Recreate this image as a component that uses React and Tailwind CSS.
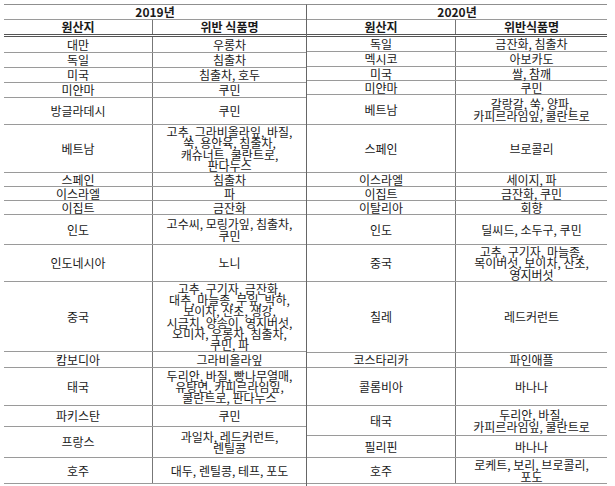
import React from 'react';

const left = [
  ['대만', '우롱차', 'h-[16px]'],
  ['독일', '침출차', 'h-[15px]'],
  ['미국', '침출차, 호두', 'h-[15px]'],
  ['미얀마', '쿠민', 'h-[15px]'],
  ['방글라데시', '쿠민', 'h-[27px]'],
  ['베트남', '고추, 그라비올라잎, 바질,\n쑥, 용안육, 침출차,\n캐슈너트, 쿨란트로,\n판다누스', 'h-[48px]'],
  ['스페인', '침출차', 'h-[14px]'],
  ['이스라엘', '파', 'h-[14px]'],
  ['이집트', '금잔화', 'h-[14px]'],
  ['인도', '고수씨, 모링가잎, 침출차,\n쿠민', 'h-[30px]'],
  ['인도네시아', '노니', 'h-[37px]'],
  ['중국', '고추, 구기자, 금잔화,\n대추, 마늘종, 무잎, 박하,\n보이차, 산초, 생강,\n시금치, 양송이, 영지버섯,\n오미자, 우롱차, 침출차,\n쿠민, 파', 'h-[70px]'],
  ['캄보디아', '그라비올라잎', 'h-[16px]'],
  ['태국', '두리안, 바질, 빵나무열매,\n유탕면, 카피르라임잎,\n쿨란트로, 판다누스', 'h-[38px]'],
  ['파키스탄', '쿠민', 'h-[21px]'],
  ['프랑스', '과일차, 레드커런트,\n렌틸콩', 'h-[31px]'],
  ['호주', '대두, 렌틸콩, 테프, 포도', 'h-[26px]'],
];

const right = [
  ['독일', '금잔화, 침출차', 'h-[15px]'],
  ['멕시코', '아보카도', 'h-[15px]'],
  ['미국', '쌀, 참깨', 'h-[14px]'],
  ['미얀마', '쿠민', 'h-[14px]'],
  ['베트남', '갈랑갈, 쑥, 양파,\n카피르라임잎, 쿨란트로', 'h-[30px]'],
  ['스페인', '브로콜리', 'h-[48px]'],
  ['이스라엘', '세이지, 파', 'h-[14px]'],
  ['이집트', '금잔화, 쿠민', 'h-[14px]'],
  ['이탈리아', '회향', 'h-[14px]'],
  ['인도', '딜씨드, 소두구, 쿠민', 'h-[30px]'],
  ['중국', '고추, 구기자, 마늘종,\n목이버섯, 보이차, 산초,\n영지버섯', 'h-[37px]'],
  ['칠레', '레드커런트', 'h-[71px]'],
  ['코스타리카', '파인애플', 'h-[15px]'],
  ['콜롬비아', '바나나', 'h-[38px]'],
  ['태국', '두리안, 바질,\n카피르라임잎, 쿨란트로', 'h-[30px]'],
  ['필리핀', '바나나', 'h-[22px]'],
  ['호주', '로케트, 보리, 브로콜리,\n포도', 'h-[26px]'],
];

function YearTable({ year, itemLabel, rows, className }) {
  return (
    <div className={`flex flex-col border-t border-[#8f8f8f] ${className}`}>
      <div className="h-[15px] flex items-center justify-center border-b border-[#9a9a9a] font-bold text-[12px] leading-[12px]">
        {year}
      </div>
      <div className="h-[17px] flex border-b-[3px] border-double border-[#555] font-bold text-[12px] leading-[12px]">
        <div className="w-[149px] flex items-center justify-center border-r border-[#777]">원산지</div>
        <div className="flex-1 flex items-center justify-center">{itemLabel}</div>
      </div>
      {rows.map(([origin, items, h]) => (
        <div key={origin} className={`${h} flex border-b border-[#9a9a9a] text-[12px] leading-[11.3px]`}>
          <div className="w-[149px] flex items-center justify-center border-r border-[#777]">{origin}</div>
          <div className="flex-1 flex items-center justify-center text-center whitespace-pre-line">{items}</div>
        </div>
      ))}
    </div>
  );
}

export default function App() {
  return (
    <div
      className="w-[615px] h-[486px] bg-white text-[#1a1a1a] pt-[4px] pl-[4px] flex"
      style={{ fontFamily: '"Noto Sans CJK KR", "Noto Sans", sans-serif' }}
    >
      <YearTable year="2019년" itemLabel="위반 식품명" rows={left} className="w-[302px]" />
      <YearTable year="2020년" itemLabel="위반식품명" rows={right} className="w-[301px] border-l border-l-[#666]" />
    </div>
  );
}
